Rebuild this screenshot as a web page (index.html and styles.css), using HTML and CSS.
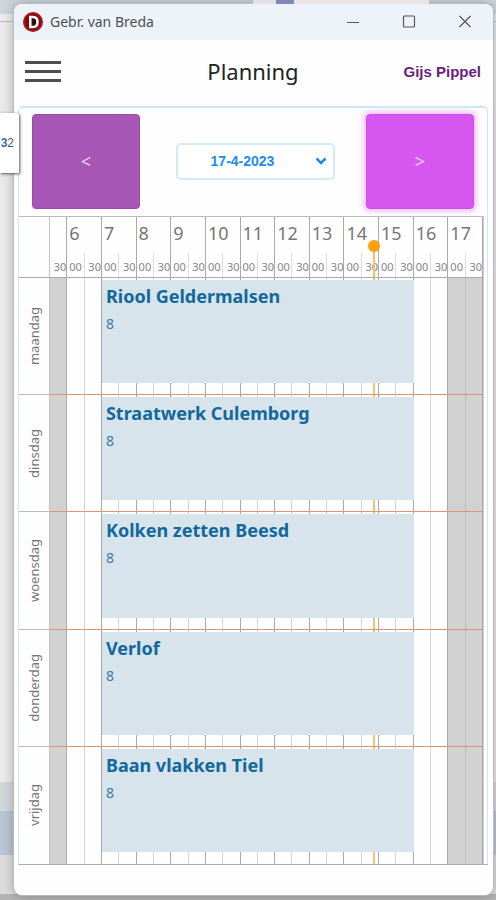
FILE: index.html
```
<!DOCTYPE html>
<html lang="nl">
<head>
    <meta charset="UTF-8">
    <meta name="viewport" content="width=device-width, initial-scale=1.0">
    <title>Gebr. van Breda</title>
    <link rel="stylesheet" href="styles.css">
</head>
<body>
    <div class="backdrop-tab"></div>
    <div class="window">
        <div class="titlebar">
            <svg class="app-icon" viewBox="0 0 20 20" aria-hidden="true">
                <circle cx="10" cy="10" r="10" fill="#a8141c"/>
                <circle cx="10" cy="10" r="8" fill="#7a0d13"/>
                <path d="M7.300 5h2.700c3.200 0 4.500 2 4.500 5s-1.300 5-4.500 5h-2.700z" fill="#3c0609" stroke="#fff" stroke-width="2.500"/>
            </svg>
            <span class="window-title">Gebr. van Breda</span>
            <button class="window-btn" aria-label="Minimaliseren">
                <svg viewBox="0 0 14 14"><path d="M1 7.500h12"/></svg>
            </button>
            <button class="window-btn" aria-label="Maximaliseren">
                <svg viewBox="0 0 14 14"><rect x="1.500" y="1" width="11" height="11" rx="1"/></svg>
            </button>
            <button class="window-btn" aria-label="Sluiten">
                <svg viewBox="0 0 14 14"><path d="M1.500 1l11 11M12.500 1l-11 11"/></svg>
            </button>
        </div>

        <header class="app-header">
            <button class="menu-btn" aria-label="Menu">
                <span></span>
                <span></span>
                <span></span>
            </button>
            <h1>Planning</h1>
            <a class="user" href="#">Gijs Pippel</a>
        </header>

        <main class="panel">
            <div class="date-nav">
                <button class="nav-btn" aria-label="Vorige week">&lt;</button>
                <div class="date-picker">
                    <select class="date-select" aria-label="Datum">
                        <option>17-4-2023</option>
                    </select>
                    <svg class="chevron" viewBox="0 0 12 8" aria-hidden="true"><path d="M1.500 1.500l4.500 4.500 4.500-4.500"/></svg>
                </div>
                <button class="nav-btn active" aria-label="Volgende week">&gt;</button>
            </div>

            <div class="schedule">
                <div class="row head">
                    <div class="day"></div>
                    <div class="track" id="hours"></div>
                </div>
                <div class="row">
                    <div class="day"><span>maandag</span></div>
                    <div class="track">
                        <div class="event"><h2>Riool Geldermalsen</h2><p>8</p></div>
                    </div>
                </div>
                <div class="row">
                    <div class="day"><span>dinsdag</span></div>
                    <div class="track">
                        <div class="event"><h2>Straatwerk Culemborg</h2><p>8</p></div>
                    </div>
                </div>
                <div class="row">
                    <div class="day"><span>woensdag</span></div>
                    <div class="track">
                        <div class="event"><h2>Kolken zetten Beesd</h2><p>8</p></div>
                    </div>
                </div>
                <div class="row">
                    <div class="day"><span>donderdag</span></div>
                    <div class="track">
                        <div class="event"><h2>Verlof</h2><p>8</p></div>
                    </div>
                </div>
                <div class="row">
                    <div class="day"><span>vrijdag</span></div>
                    <div class="track">
                        <div class="event"><h2>Baan vlakken Tiel</h2><p>8</p></div>
                    </div>
                </div>
            </div>
        </main>
    </div>
    <div class="popup"><b>3</b>2</div>

    <script src="script.js"></script>
</body>
</html>
```

FILE: styles.css
```
* {
    box-sizing: border-box;
}

body {
    margin: 0;
    min-height: 100vh;
    padding: 4px 3px 5px 14px;
    display: flex;
    position: relative;
    font-family: "Noto Sans", sans-serif;
    background: linear-gradient(#cdd5dd 0 14px, #e9ebed 14px 21px, #b9bcbf 21px 22px, #e9e9e9 22px 782px, #d3d7dc 782px 811px, #b9c6d3 811px 855px, #dcdcdc 855px 894px, #b4b4b4 894px);
}

.backdrop-tab {
    position: absolute;
    top: 0;
    left: 253px;
    right: 67px;
    height: 4px;
    background: linear-gradient(90deg, #e6dfe3 0 23px, #7f88b8 23px 41px, #ece4e2 41px);
}

button {
    border: none;
    background: none;
    padding: 0;
    font: inherit;
    cursor: pointer;
}

.window {
    flex: 1;
    min-width: 0;
    display: flex;
    flex-direction: column;
    background: #fefefe;
    border-radius: 8px;
    overflow: hidden;
    box-shadow: 0 0 0 1px #b8bbbe, 0 0 12px rgba(0, 0, 0, 0.3);
}

/* Title bar */
.titlebar {
    display: flex;
    align-items: center;
    height: 36px;
    padding-left: 9px;
    background: #eef3f9;
}

.app-icon {
    width: 20px;
    height: 20px;
}

.window-title {
    flex: 1;
    margin-left: 7px;
    font-size: 14px;
    line-height: 20px;
    color: #4c5054;
}

.window-btn {
    width: 56px;
    height: 36px;
}

.window-btn svg {
    width: 14px;
    height: 14px;
    display: block;
    margin: 0 auto;
    fill: none;
    stroke: #55585b;
    stroke-width: 1.2;
}

/* Header */
.app-header {
    display: grid;
    grid-template-columns: 1fr auto 1fr;
    align-items: center;
    height: 66px;
    padding: 0 12px 4px 11px;
}

.menu-btn {
    display: flex;
    flex-direction: column;
    gap: 6px;
    width: 36px;
}

.menu-btn span {
    height: 3px;
    background: #4f4d4f;
}

h1 {
    margin: 0;
    font-size: 22px;
    line-height: 30px;
    font-weight: 400;
    color: #222;
}

.user {
    justify-self: end;
    font: bold 15px "Liberation Sans", sans-serif;
    color: #6b1d7d;
    text-decoration: none;
}

/* Date navigation */
.panel {
    flex: 1;
    display: flex;
    flex-direction: column;
    margin: 0 5px 30px 4px;
    border: 1px solid #cfe6f8;
    border-top-width: 2px;
    border-bottom: 1px solid #aaa;
    border-radius: 5px 5px 0 0;
}

.date-nav {
    display: flex;
    align-items: center;
    justify-content: space-between;
    height: 108px;
    padding: 0 13px 2px;
}

.nav-btn {
    width: 108px;
    height: 95px;
    border-radius: 4px;
    border: 1px solid #9c48ad;
    background: #a656b4;
    color: #ecd5f1;
    font-size: 18px;
}

.nav-btn.active {
    border-color: #cd4ce8;
    background: #d656f0;
    color: #f7d4fd;
    box-shadow: 0 0 4px 3px #f0c6fa;
}

.date-picker {
    position: relative;
    width: 159px;
    margin-left: 5px;
}

.date-select {
    display: block;
    appearance: none;
    width: 100%;
    height: 37px;
    padding: 0 26px 0 0;
    border: 2px solid #d3eafb;
    border-radius: 5px;
    background: #fff;
    color: #1f8cea;
    font: bold 14px "Liberation Sans", sans-serif;
    text-align: center;
    text-align-last: center;
}

.chevron {
    position: absolute;
    right: 8px;
    top: 14px;
    width: 12px;
    height: 8px;
    fill: none;
    stroke: #1f8cea;
    stroke-width: 2.5;
    pointer-events: none;
}

/* Schedule */
.schedule {
    flex: 1;
    display: flex;
    flex-direction: column;
    margin-right: 3px;
    border-top: 1px solid #bbb;
    border-right: 1px solid #ccc;
}

.row {
    flex: 1 1 0;
    display: flex;
}

.day {
    width: 31px;
    display: flex;
    align-items: center;
    justify-content: center;
    border-right: 1px solid #c4c4c4;
    border-bottom: 1px solid #bbb;
    font-size: 13px;
    line-height: 18px;
    color: #777;
}

.day span {
    writing-mode: vertical-rl;
    transform: rotate(180deg);
}

.track {
    flex: 1;
    position: relative;
    display: grid;
    grid-template-columns: repeat(25, minmax(0, 1fr));
}

/* Day separator, drawn over the slots */
.track::after {
    content: "";
    position: absolute;
    z-index: 3;
    left: 0;
    right: 0;
    bottom: 0;
    height: 1px;
    background: #dc9478;
}

.row:last-child .day {
    border-bottom: none;
}

.row:last-child .track::after {
    display: none;
}

.slot {
    grid-row: 1;
    border-right: 1px solid #d4d4d4;
}

.slot.full {
    border-right-color: #aaa;
}

.slot.closed {
    background: #d2d2d2;
}

.slot.closed:not(.full) {
    border-right-color: #bbb;
}

.event {
    grid-row: 1;
    grid-column: 4 / span 18;
    z-index: 2;
    margin: 2px 0 12px;
    padding: 4px;
    background: #d7e4eb;
    color: #12689c;
}

.event h2 {
    margin: 0;
    font-size: 18px;
    line-height: 24px;
    font-weight: 700;
}

.event p {
    margin: 6px 0 0;
    font-size: 14px;
    line-height: 20px;
    color: #3c7ba6;
}

/* Hour header */
.head {
    flex: 0 0 61px;
}

.head .track {
    grid-template-rows: 36px 25px;
}

.head .track::after {
    background: #aaa;
}

.head .day {
    border-bottom-color: #aaa;
}

.hour {
    grid-row: 1;
    padding-left: 2px;
    font-size: 18px;
    line-height: 32px;
    color: #777;
    border-right: 1px solid #aaa;
}

.half {
    grid-row: 2;
    font-size: 11px;
    line-height: 28px;
    text-align: right;
    color: #858585;
    border-right: 1px solid #aaa;
}

.half.start {
    text-align: left;
    padding-left: 2px;
    border-right-color: #ddd;
}

/* Current time */
.now {
    position: absolute;
    z-index: 1;
    top: 0;
    bottom: 0;
    width: 2px;
    margin-left: -1px;
    background: #f8bf70;
}

.head .now {
    top: 29px;
}

.head .now::before {
    content: "";
    position: absolute;
    top: -6px;
    left: -5px;
    width: 12px;
    height: 12px;
    border-radius: 50%;
    background: #ff9f0a;
}

/* Popup of the application behind the window */
.popup {
    position: absolute;
    left: 0;
    top: 113px;
    width: 19px;
    height: 60px;
    background: #fff;
    border-radius: 0 3px 0 0;
    box-shadow: 1px 1px 3px #555;
    display: flex;
    align-items: center;
    justify-content: flex-end;
    padding-right: 5px;
    font-family: "Liberation Sans", sans-serif;
    font-size: 12px;
    color: #555;
}

.popup b {
    color: #2f6ea8;
}
```

FILE: script.js
```
const FIRST_HOUR = 6;
const LAST_HOUR = 17;
const SLOTS = 25;
const NOW = 14.85;

const hours = document.getElementById('hours');

// The first half hour belongs to the hour before the visible range
const blank = document.createElement('div');
blank.className = 'hour';
hours.appendChild(blank);

for (let h = FIRST_HOUR; h <= LAST_HOUR; h++) {
    const hour = document.createElement('div');
    hour.className = 'hour';
    hour.style.gridColumn = 'span 2';
    hour.textContent = h;
    hours.appendChild(hour);
}

for (let i = 0; i < SLOTS; i++) {
    const half = document.createElement('div');
    half.className = i % 2 === 0 ? 'half' : 'half start';
    half.textContent = i % 2 === 0 ? '30' : '00';
    hours.appendChild(half);
}

document.querySelectorAll('.track').forEach(function(track) {
    if (track !== hours) {
        for (let i = 0; i < SLOTS; i++) {
            const slot = document.createElement('div');
            slot.className = 'slot';
            slot.style.gridColumn = i + 1;
            slot.classList.toggle('full', i % 2 === 0);
            slot.classList.toggle('closed', i === 0 || i > 22);
            track.appendChild(slot);
        }
    }

    const now = document.createElement('div');
    now.className = 'now';
    now.style.left = ((NOW - FIRST_HOUR + 0.5) * 2 / SLOTS * 100) + '%';
    track.appendChild(now);
});
```
